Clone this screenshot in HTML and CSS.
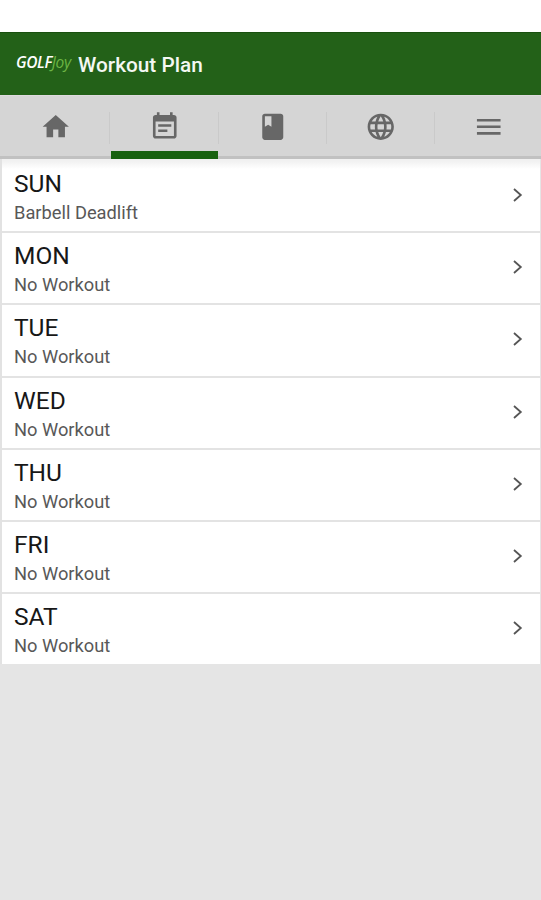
FILE: index.html
```html
<!DOCTYPE html>
<html lang="en">
<head>
<meta charset="utf-8">
<title>Workout Plan</title>
<link rel="stylesheet" href="styles.css">
</head>
<body>
<header class="bar">
  <span class="logo"><b>GOLF</b><i>Joy</i></span>
  <h1>Workout Plan</h1>
</header>
<nav class="tabs">
  <a class="tab"><svg viewBox="0 0 24 24"><path d="M10 20v-6h4v6h5v-8h3L12 3 2 12h3v8z"/></svg></a>
  <a class="tab active"><svg viewBox="0 0 24 24"><path d="M17 10H7v2h10v-2zm2-7h-1V1h-2v2H8V1H6v2H5c-1.11 0-1.99.9-1.99 2L3 19c0 1.1.89 2 2 2h14c1.1 0 2-.9 2-2V5c0-1.1-.9-2-2-2zm0 16H5V8h14v11zm-5-5H7v2h7v-2z"/></svg></a>
  <a class="tab"><svg viewBox="0 0 24 24"><path d="M18 2H6c-1.100 0-2 .9-2 2v16c0 1.100.9 2 2 2h12c1.100 0 2-.9 2-2V4c0-1.100-.9-2-2-2zM6 4h5v8l-2.500-1.500L6 12V4z"/></svg></a>
  <a class="tab"><svg viewBox="0 0 24 24"><path d="M11.990 2C6.470 2 2 6.480 2 12s4.470 10 9.990 10C17.520 22 22 17.520 22 12S17.520 2 11.990 2zm6.930 6h-2.950c-.32-1.250-.78-2.450-1.380-3.560 1.840.63 3.370 1.910 4.330 3.560zM12 4.040c.83 1.200 1.480 2.530 1.910 3.960h-3.820c.43-1.430 1.080-2.760 1.910-3.960zM4.260 14C4.100 13.360 4 12.690 4 12s.1-1.360.26-2h3.380c-.08.66-.14 1.320-.14 2s.06 1.340.14 2H4.260zm.82 2h2.950c.32 1.250.78 2.450 1.380 3.560-1.840-.63-3.370-1.900-4.330-3.560zm2.950-8H5.080c.96-1.660 2.490-2.930 4.330-3.560C8.810 5.550 8.350 6.750 8.030 8zM12 19.960c-.83-1.200-1.480-2.530-1.910-3.960h3.820c-.43 1.430-1.080 2.760-1.910 3.960zM14.340 14H9.660c-.09-.66-.16-1.320-.16-2s.07-1.350.16-2h4.680c.09.65.16 1.320.16 2s-.07 1.340-.16 2zm.25 5.560c.6-1.110 1.060-2.310 1.380-3.560h2.950c-.96 1.650-2.490 2.930-4.330 3.560zM16.360 14c.08-.66.14-1.320.14-2s-.06-1.340-.14-2h3.380c.16.64.26 1.310.26 2s-.1 1.360-.26 2h-3.380z"/></svg></a>
  <a class="tab"><svg viewBox="0 0 24 24"><path d="M3 18h18v-2H3v2zm0-5h18v-2H3v2zm0-7v2h18V6H3z"/></svg></a>
</nav>
<main class="days">
  <section class="day"><div><h2>SUN</h2><p>Barbell Deadlift</p></div><svg viewBox="0 0 10 14"><path d="M1 1l6.800 6L1 13"/></svg></section>
  <section class="day"><div><h2>MON</h2><p>No Workout</p></div><svg viewBox="0 0 10 14"><path d="M1 1l6.800 6L1 13"/></svg></section>
  <section class="day"><div><h2>TUE</h2><p>No Workout</p></div><svg viewBox="0 0 10 14"><path d="M1 1l6.800 6L1 13"/></svg></section>
  <section class="day"><div><h2>WED</h2><p>No Workout</p></div><svg viewBox="0 0 10 14"><path d="M1 1l6.800 6L1 13"/></svg></section>
  <section class="day"><div><h2>THU</h2><p>No Workout</p></div><svg viewBox="0 0 10 14"><path d="M1 1l6.800 6L1 13"/></svg></section>
  <section class="day"><div><h2>FRI</h2><p>No Workout</p></div><svg viewBox="0 0 10 14"><path d="M1 1l6.800 6L1 13"/></svg></section>
  <section class="day"><div><h2>SAT</h2><p>No Workout</p></div><svg viewBox="0 0 10 14"><path d="M1 1l6.800 6L1 13"/></svg></section>
</main>
</body>
</html>
```
FILE: styles.css
```css
* { box-sizing: border-box; }
html { background: #e5e5e5; }
body { margin: 0; border-top: 32px solid #fff; font-family: Roboto, sans-serif; }
h1, h2, p { margin: 0; font-weight: 400; }
.bar {
  display: flex;
  align-items: center;
  height: 63px;
  padding-left: 16px;
  background: #236118;
  border-top: 1px solid #19500f;
}
.logo {
  display: flex;
  width: 62px;
  padding-bottom: 4px;
  font: italic 15.5px/18px "Open Sans", sans-serif;
  letter-spacing: -0.4px;
  color: #fff;
}
.logo b { font-weight: 600; }
.logo i { color: #6cb544; }
.bar h1 { padding-top: 2px; font-size: 20.8px; line-height: 26px; font-weight: 500; color: #f4f8f3; }
.tabs {
  display: flex;
  height: 64px;
  padding-left: 2px;
  background: #d5d5d5;
  border-top: 1px solid #dedade;
  box-shadow: inset 0 -3px #c1c1c1;
}
.tab {
  display: flex;
  flex: 1 0 108.250px;
  justify-content: center;
  padding-top: 14.500px;
  background: linear-gradient(#cacaca, #cacaca) right 0 top 16px / 1px 32px no-repeat;
}
.tab:last-child { background: none; }
.tab svg { width: 31.500px; height: 31.500px; fill: #676767; }
.tab.active {
  background:
    linear-gradient(#17610f, #17610f) left 1px bottom 0 / calc(100% - 2px) 8px no-repeat,
    linear-gradient(#cacaca, #cacaca) right 0 top 16px / 1px 32px no-repeat;
}
.days { border-left: 2px solid #e2e2e2; border-right: 1px solid #e5e5e5; background: #fff; }
.day {
  display: flex;
  justify-content: space-between;
  height: 72.200px;
  padding: 9px 17px 0 12px;
  border-top: 2px solid #e3e3e3;
}
.day:first-child {
  border-top-color: #f1f1f1;
  background: linear-gradient(#f1f1f1, #fff 8px);
}
.day h2 { font-size: 24.500px; line-height: 28px; color: #171717; font-weight: 400; }
.day p { margin-top: 4px; font-size: 18.300px; line-height: 22px; color: #585858; }
.day svg { width: 10px; height: 14px; margin-top: 18px; fill: none; stroke: #555; stroke-width: 1.800; }
```
